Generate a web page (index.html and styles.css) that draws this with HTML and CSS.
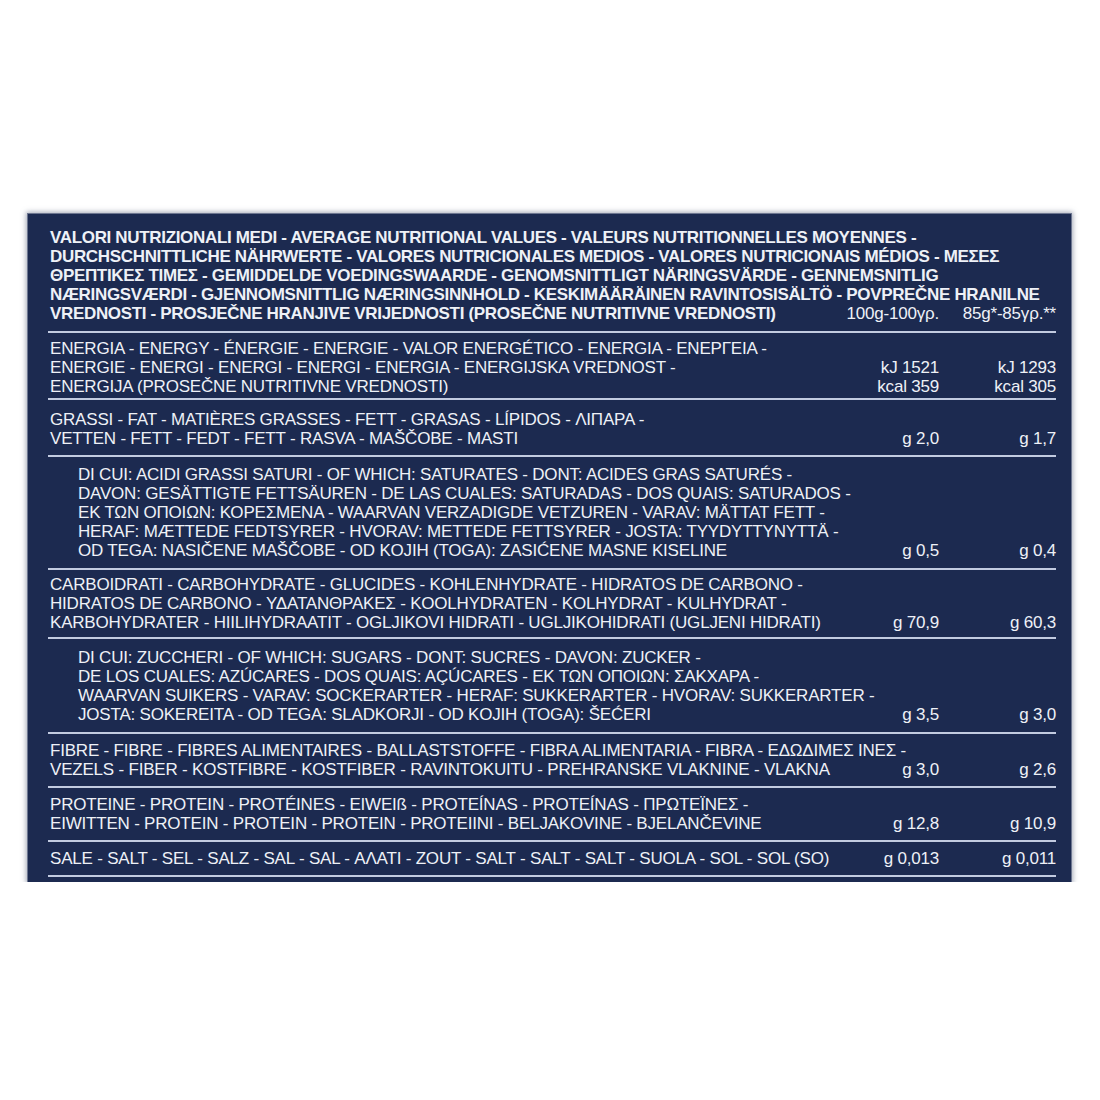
FILE: index.html
```html
<!DOCTYPE html>
<html lang="it">
<head>
<meta charset="utf-8">
<title>Valori nutrizionali</title>
<link rel="stylesheet" href="styles.css">
</head>
<body>
<div class="panel">
  <div class="row head">
    <div class="label">VALORI NUTRIZIONALI MEDI - AVERAGE NUTRITIONAL VALUES - VALEURS NUTRITIONNELLES MOYENNES -<br>DURCHSCHNITTLICHE NÄHRWERTE - VALORES NUTRICIONALES MEDIOS - VALORES NUTRICIONAIS MÉDIOS - ΜΕΣΕΣ<br>ΘΡΕΠΤΙΚΕΣ ΤΙΜΕΣ - GEMIDDELDE VOEDINGSWAARDE - GENOMSNITTLIGT NÄRINGSVÄRDE - GENNEMSNITLIG<br>NÆRINGSVÆRDI - GJENNOMSNITTLIG NÆRINGSINNHOLD - KESKIMÄÄRÄINEN RAVINTOSISÄLTÖ - POVPREČNE HRANILNE<br>VREDNOSTI - PROSJEČNE HRANJIVE VRIJEDNOSTI (PROSEČNE NUTRITIVNE VREDNOSTI)</div>
    <div class="val">100g-100γρ.</div>
    <div class="val">85g*-85γρ.**</div>
  </div>
  <div class="row energy">
    <div class="label">ENERGIA - ENERGY - ÉNERGIE - ENERGIE - VALOR ENERGÉTICO - ENERGIA - ΕΝΕΡΓΕΙΑ -<br>ENERGIE - ENERGI - ENERGI - ENERGI - ENERGIA - ENERGIJSKA VREDNOST -<br>ENERGIJA (PROSEČNE NUTRITIVNE VREDNOSTI)</div>
    <div class="val">kJ 1521<br>kcal 359</div>
    <div class="val">kJ 1293<br>kcal 305</div>
  </div>
  <div class="row fat">
    <div class="label">GRASSI - FAT - MATIÈRES GRASSES - FETT - GRASAS - LÍPIDOS - ΛΙΠΑΡΑ -<br>VETTEN - FETT - FEDT - FETT - RASVA - MAŠČOBE - MASTI</div>
    <div class="val">g 2,0</div>
    <div class="val">g 1,7</div>
  </div>
  <div class="row sub saturates">
    <div class="label">DI CUI: ACIDI GRASSI SATURI - OF WHICH: SATURATES - DONT: ACIDES GRAS SATURÉS -<br>DAVON: GESÄTTIGTE FETTSÄUREN - DE LAS CUALES: SATURADAS - DOS QUAIS: SATURADOS -<br>ΕΚ ΤΩΝ ΟΠΟΙΩΝ: ΚΟΡΕΣΜΕΝΑ - WAARVAN VERZADIGDE VETZUREN - VARAV: MÄTTAT FETT -<br>HERAF: MÆTTEDE FEDTSYRER - HVORAV: METTEDE FETTSYRER - JOSTA: TYYDYTTYNYTTÄ -<br>OD TEGA: NASIČENE MAŠČOBE - OD KOJIH (TOGA): ZASIĆENE MASNE KISELINE</div>
    <div class="val">g 0,5</div>
    <div class="val">g 0,4</div>
  </div>
  <div class="row carbs">
    <div class="label">CARBOIDRATI - CARBOHYDRATE - GLUCIDES - KOHLENHYDRATE - HIDRATOS DE CARBONO -<br>HIDRATOS DE CARBONO - ΥΔΑΤΑΝΘΡΑΚΕΣ - KOOLHYDRATEN - KOLHYDRAT - KULHYDRAT -<br>KARBOHYDRATER - HIILIHYDRAATIT - OGLJIKOVI HIDRATI - UGLJIKOHIDRATI (UGLJENI HIDRATI)</div>
    <div class="val">g 70,9</div>
    <div class="val">g 60,3</div>
  </div>
  <div class="row sub sugars">
    <div class="label">DI CUI: ZUCCHERI - OF WHICH: SUGARS - DONT: SUCRES - DAVON: ZUCKER -<br>DE LOS CUALES: AZÚCARES - DOS QUAIS: AÇÚCARES - ΕΚ ΤΩΝ ΟΠΟΙΩΝ: ΣΑΚΧΑΡΑ -<br>WAARVAN SUIKERS - VARAV: SOCKERARTER - HERAF: SUKKERARTER - HVORAV: SUKKERARTER -<br>JOSTA: SOKEREITA - OD TEGA: SLADKORJI - OD KOJIH (TOGA): ŠEĆERI</div>
    <div class="val">g 3,5</div>
    <div class="val">g 3,0</div>
  </div>
  <div class="row">
    <div class="label">FIBRE - FIBRE - FIBRES ALIMENTAIRES - BALLASTSTOFFE - FIBRA ALIMENTARIA - FIBRA - ΕΔΩΔΙΜΕΣ ΙΝΕΣ -<br>VEZELS - FIBER - KOSTFIBRE - KOSTFIBER - RAVINTOKUITU - PREHRANSKE VLAKNINE - VLAKNA</div>
    <div class="val">g 3,0</div>
    <div class="val">g 2,6</div>
  </div>
  <div class="row">
    <div class="label">PROTEINE - PROTEIN - PROTÉINES - EIWEIß - PROTEÍNAS - PROTEÍNAS - ΠΡΩΤΕΪΝΕΣ -<br>EIWITTEN - PROTEIN - PROTEIN - PROTEIN - PROTEIINI - BELJAKOVINE - BJELANČEVINE</div>
    <div class="val">g 12,8</div>
    <div class="val">g 10,9</div>
  </div>
  <div class="row">
    <div class="label">SALE - SALT - SEL - SALZ - SAL - SAL - ΑΛΑΤΙ - ZOUT - SALT - SALT - SALT - SUOLA - SOL - SOL (SO)</div>
    <div class="val">g 0,013</div>
    <div class="val">g 0,011</div>
  </div>
</div>
</body>
</html>
```
FILE: styles.css
```css
html, body {
  margin: 0;
  padding: 0;
  background: #ffffff;
}
body {
  font-family: "Liberation Sans", Arial, sans-serif;
}
.panel {
  box-sizing: border-box;
  margin: 214px 0 0 28px;
  width: 1043px;
  height: 668px;
  padding: 14px 15px 0 20px;
  background: #1c2a50;
  color: #eef1f7;
  box-shadow: 0 0 0 1px #6d7690, 0 0 5px 2px rgba(90, 100, 125, 0.55);
}
.row {
  display: grid;
  grid-template-columns: 1fr 117px 117px;
  align-items: end;
  padding: 7px 0 7px 2px;
  border-bottom: 2px solid #c2cbe0;
  font-size: 17px;
  line-height: 19px;
  letter-spacing: -0.2px;
  white-space: nowrap;
}
.row.head {
  padding-top: 0;
  padding-bottom: 8px;
}
.head .label {
  font-weight: bold;
  letter-spacing: -0.33px;
}
.row.energy {
  padding-top: 6px;
  padding-bottom: 2px;
}
.row.fat {
  padding-top: 10px;
  padding-bottom: 7px;
}
.row.saturates {
  padding-top: 8px;
  padding-bottom: 8px;
}
.row.carbs {
  padding-top: 5px;
  padding-bottom: 5px;
}
.row.sugars {
  padding-top: 9px;
  padding-bottom: 8px;
}
.sub .label {
  padding-left: 28px;
}
.label {
  min-width: 0;
}
.val {
  text-align: right;
}
```
